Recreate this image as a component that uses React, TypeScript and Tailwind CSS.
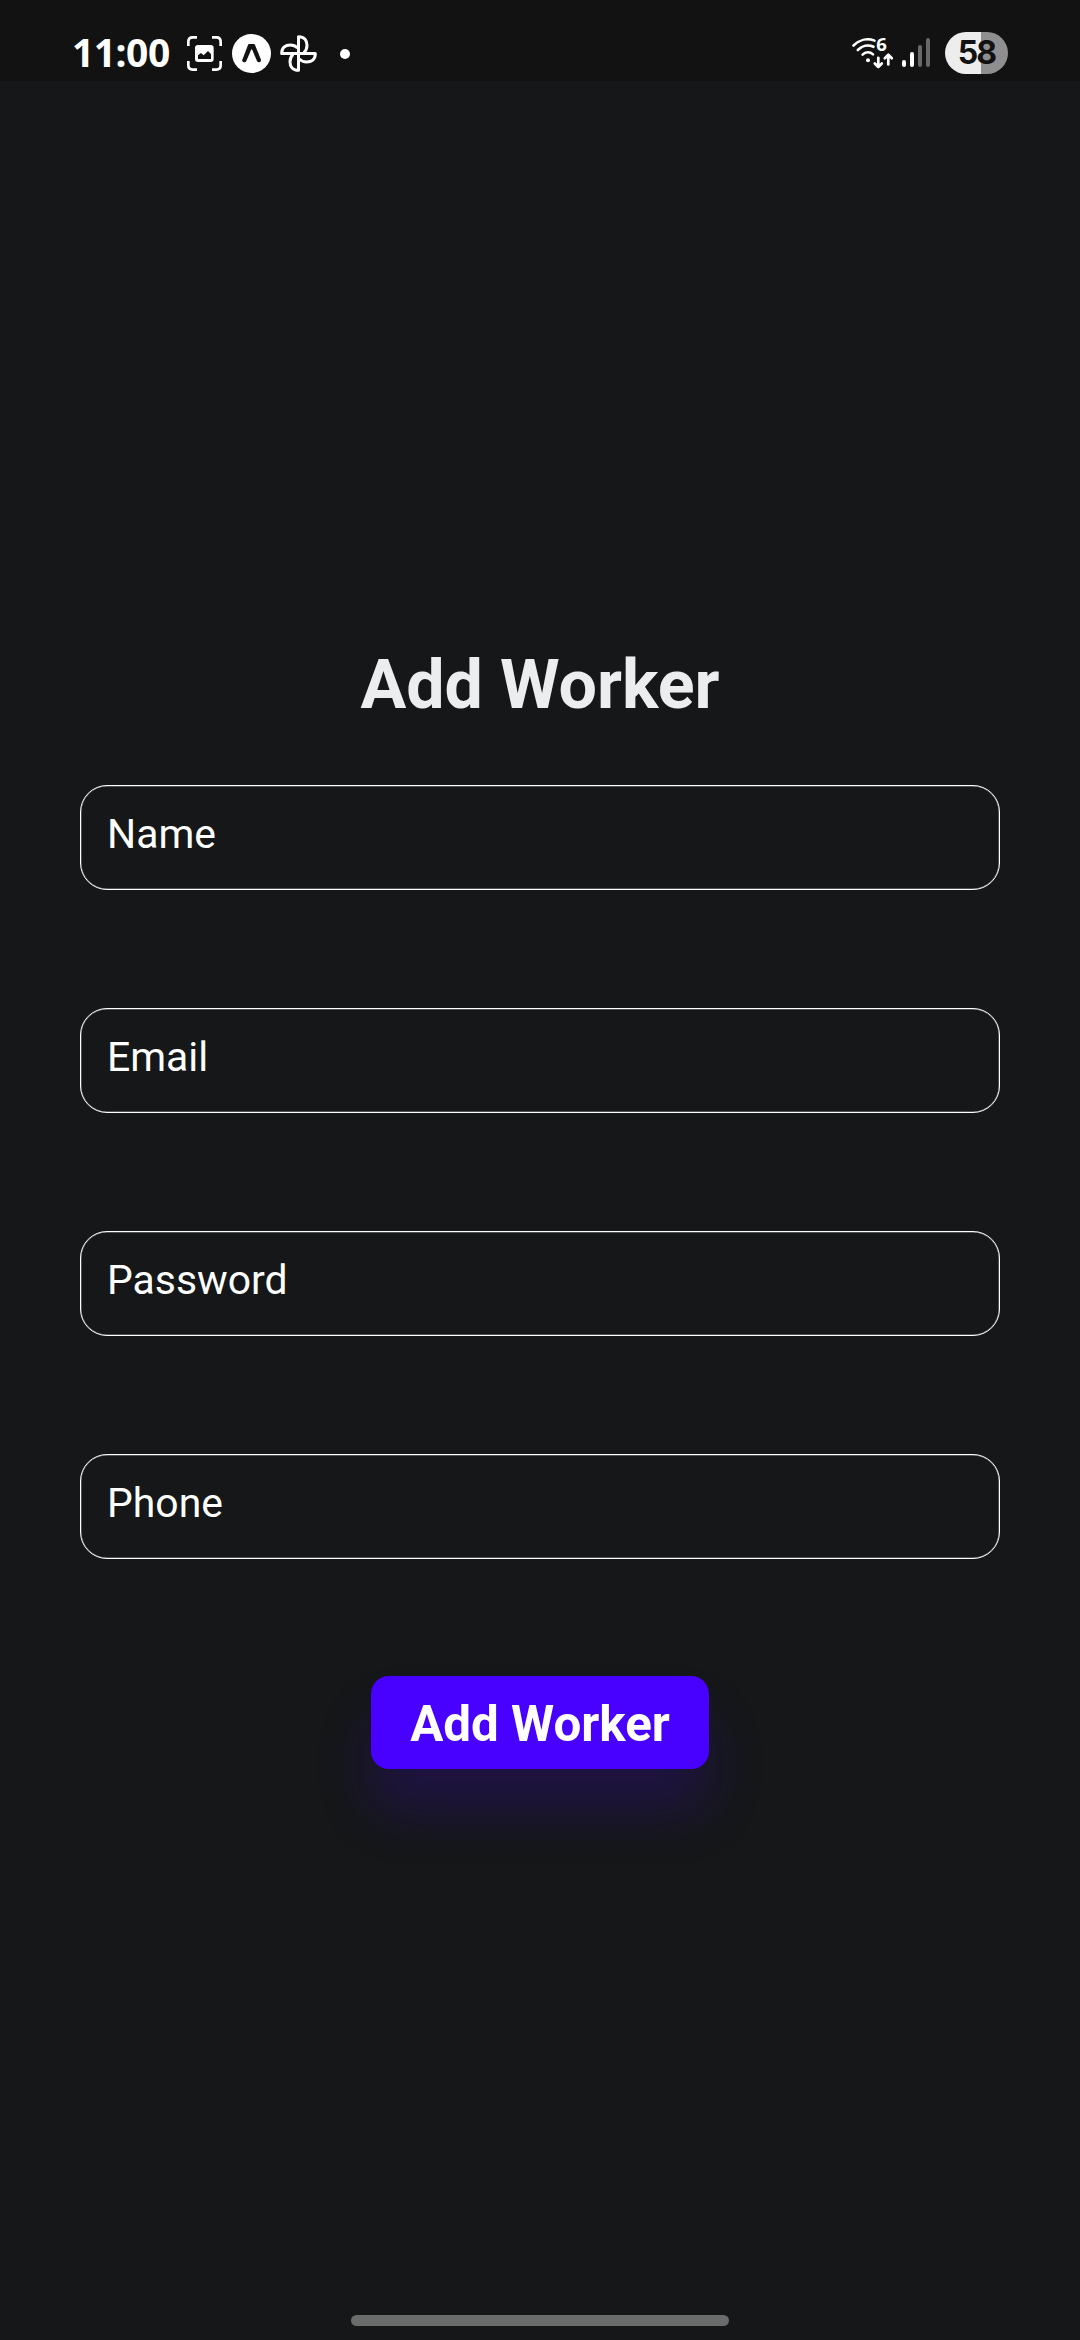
const fields = ["Name", "Email", "Password", "Phone"];

function CaptureIcon() {
  return (
    <svg className="ml-[19px] size-[35px]" viewBox="51 48 105 105" fill="none">
      <path
        d="M55 78V65Q55 52 68 52H81M126 52H139Q152 52 152 65V78M152 123V136Q152 149 139 149H126M81 149H68Q55 149 55 136V123"
        stroke="#fff"
        strokeWidth="8"
      />
      <rect x="75" y="75" width="56" height="51" rx="9" fill="#fff" />
      <path d="M84 117V106L93 99L101 106L114 93L123 102V117Z" fill="#121212" />
    </svg>
  );
}

function CaretIcon() {
  return (
    <svg className="ml-[10px] size-[39px]" viewBox="186 42 117 117">
      <circle cx="244.5" cy="100.500" r="58.500" fill="#fff" />
      <path
        d="M237 72H252Q254 72 255 75L273 119Q274 124 270 126Q264 129 261 123L247 90Q245 86 243 90L229 123Q226 128 220 126Q215 124 217 119L234 75Q235 72 237 72Z"
        fill="#121212"
      />
    </svg>
  );
}

function PinwheelIcon() {
  return (
    <svg className="ml-[9px] size-[37px]" viewBox="330 45 111 111" fill="none" stroke="#fff" strokeWidth="9" strokeLinejoin="round">
      <path d="M385.500 100.500V50C404 50 411 62 411 76C411 86 407 93 402 98" />
      <path d="M385.500 100.500H436C436 119 424 126 410 126C400 126 393 122 388 117" />
      <path d="M385.500 100.500V151C367 151 360 139 360 125C360 115 364 108 369 103" />
      <path d="M385.500 100.500H335C335 82 347 75 361 75C371 75 378 79 383 84" />
    </svg>
  );
}

function WifiIcon() {
  return (
    <svg className="h-[34px] w-[46px] overflow-visible" viewBox="0 0 46 34" fill="none" stroke="#fff" strokeWidth="2.600" strokeLinecap="round" strokeLinejoin="round">
      <path d="M3.500 9.500C9 4 17 1.800 24.500 4.600" />
      <path d="M7.800 14C12 9.600 18 8.200 23.500 10.800" />
      <path d="M12.600 18.600C15.500 15.600 20 15.600 23 18.400" />
      <circle cx="18" cy="24.300" r="2" fill="#fff" stroke="none" />
      <path d="M28.300 21.800V31M24.800 27.500L28.300 31L31.800 27.500" strokeWidth="2.700" />
      <path d="M38.300 28.500V18.800M34.800 22.300L38.300 18.800L41.800 22.300" strokeWidth="2.700" />
      <text x="26.200" y="15.400" fill="#fff" stroke="none" fontFamily="'Noto Sans', sans-serif" fontWeight="700" fontSize="18.500">
        6
      </text>
    </svg>
  );
}

function StatusBar() {
  return (
    <header className="flex h-[81px] shrink-0 items-start bg-[#121212] pt-[26px] text-white">
      <div className="flex h-[55px] items-center pl-[72px]">
        <span className="-mt-[3px] w-[96px] whitespace-nowrap font-['Noto_Sans',sans-serif] text-[39px] font-bold leading-[54px] tracking-[-0.5px]">
          11:00
        </span>
        <CaptureIcon />
        <CaretIcon />
        <PinwheelIcon />
        <span className="ml-[23px] size-[10px] rounded-full bg-white" />
      </div>
      <div className="ml-auto flex pr-[72px] pt-[6px]">
        <div className="mt-[4px]">
          <WifiIcon />
        </div>
        <div className="ml-[6px] mt-[6px] flex h-[29px] items-end gap-1">
          <span className="h-[7px] w-1 rounded-full bg-white" />
          <span className="h-[15px] w-1 rounded-full bg-white" />
          <span className="h-[22px] w-1 rounded-full bg-[#686868]" />
          <span className="h-[29px] w-1 rounded-full bg-[#686868]" />
        </div>
        <div className="ml-[15px] flex h-[42px] w-[63px] items-center justify-center rounded-full bg-[linear-gradient(to_right,#ededed_36px,#8f8f8f_36px)] font-['Inter',sans-serif] text-[32px] font-bold leading-[42px] tracking-[-2px] text-[#121212]">
          58
        </div>
      </div>
    </header>
  );
}

export default function App() {
  return (
    <div className="flex h-[2340px] w-[1080px] flex-col overflow-hidden bg-[#151718] font-['Roboto',sans-serif]">
      <StatusBar />
      <main className="flex flex-1 flex-col items-center px-[80px] pt-[564px]">
        <h1 className="text-[68.2px] font-bold leading-[80px] text-[#ecedee]">Add Worker</h1>
        <div className="mt-[60px] flex w-full flex-col gap-[118px]">
          {fields.map((name) => (
            <div
              key={name}
              className="h-[105px] rounded-[27px] border border-white pl-[26px] pt-[23px] text-[40.9px] leading-[50px] text-white shadow-[inset_0_0_0_0.5px_rgba(255,255,255,0.5)]"
            >
              {name}
            </div>
          ))}
        </div>
        <button className="mt-[117px] h-[93px] w-[338px] rounded-[18px] bg-[#4800ff] pt-[3px] text-[49.3px] font-bold leading-[90px] text-white shadow-[0_42px_56px_rgba(72,0,255,0.19)]">
          Add Worker
        </button>
      </main>
      <div className="mb-[14px] h-[11px] w-[378px] self-center rounded-full bg-[#6a6c6b]" />
    </div>
  );
}
